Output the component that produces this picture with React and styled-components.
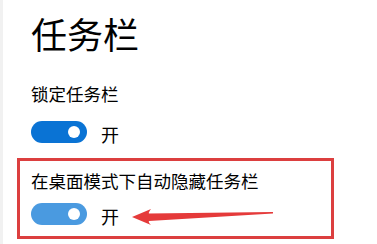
import React from "react"
import styled, { createGlobalStyle } from 'styled-components'

const GlobalStyle = createGlobalStyle`
    html, body {
      margin: 0;
      padding: 0;
      background: #fff;
    }
    body {
      font-family: "Noto Sans CJK SC", "Noto Sans", sans-serif;
      color: #000;
    }
`

const settings = [
    { label: '锁定任务栏', state: '开', boxed: false },
    { label: '在桌面模式下自动隐藏任务栏', state: '开', boxed: true },
]

const App = () => {
    return (
        <Page>
            <GlobalStyle />
            <Rail />
            <Content>
                <Title>任务栏</Title>
                {settings.map(s => (
                    <Setting key={s.label} $boxed={s.boxed}>
                        <Label $boxed={s.boxed}>{s.label}</Label>
                        <ToggleRow>
                            <Toggle $soft={s.boxed}>
                                <Knob />
                            </Toggle>
                            <State>{s.state}</State>
                        </ToggleRow>
                        {s.boxed && (
                            <Arrow width="146" height="20" viewBox="0 0 146 20">
                                <path d="M2 10 L21 2 Q18 6 19 6.5 L143 5 L143 6.5 L19 14 Q18 15 21 18 Z" fill="#e53a3a" />
                            </Arrow>
                        )}
                    </Setting>
                ))}
            </Content>
        </Page>
    )
}

const Page = styled.div`
    display: flex;
    width: 377px;
    height: 244px;
    overflow: hidden;
    background: #fff;
`

const Rail = styled.div`
    width: 3px;
    flex-shrink: 0;
    background: #f1f1f1;
`

const Content = styled.div`
    display: flex;
    flex-direction: column;
    padding: 15px 0 0 28px;
`

const Title = styled.h1`
    margin: 0 0 34px;
    font-size: 36px;
    line-height: 36px;
    font-weight: 400;
`

const Setting = styled.div`
    position: relative;
    display: flex;
    flex-direction: column;
    width: ${p => p.$boxed ? '300px' : 'auto'};
    margin: ${p => p.$boxed ? '15px 0 0 -14px' : '0'};
    padding: ${p => p.$boxed ? '11px 0 11px 11px' : '0'};
    border: ${p => p.$boxed ? '3px solid #dc3f3f' : 'none'};
`

const Label = styled.div`
    font-size: 17.5px;
    line-height: 17.5px;
    margin-bottom: ${p => p.$boxed ? '13.5px' : '18.5px'};
`

const ToggleRow = styled.div`
    display: flex;
    align-items: center;
    height: 22px;
`

const Toggle = styled.div`
    display: flex;
    align-items: center;
    justify-content: flex-end;
    box-sizing: border-box;
    width: 56px;
    height: 22px;
    padding-right: 7px;
    border-radius: 11px;
    background: ${p => p.$soft ? '#4a9ae0' : '#0a73d4'};
`

const Knob = styled.span`
    width: 12px;
    height: 12px;
    border-radius: 50%;
    background: #fff;
`

const State = styled.span`
    margin: 4px 0 0 14px;
    font-size: 18px;
    line-height: 18px;
`

const Arrow = styled.svg`
    position: absolute;
    left: 110px;
    top: 46px;
`

export default App
